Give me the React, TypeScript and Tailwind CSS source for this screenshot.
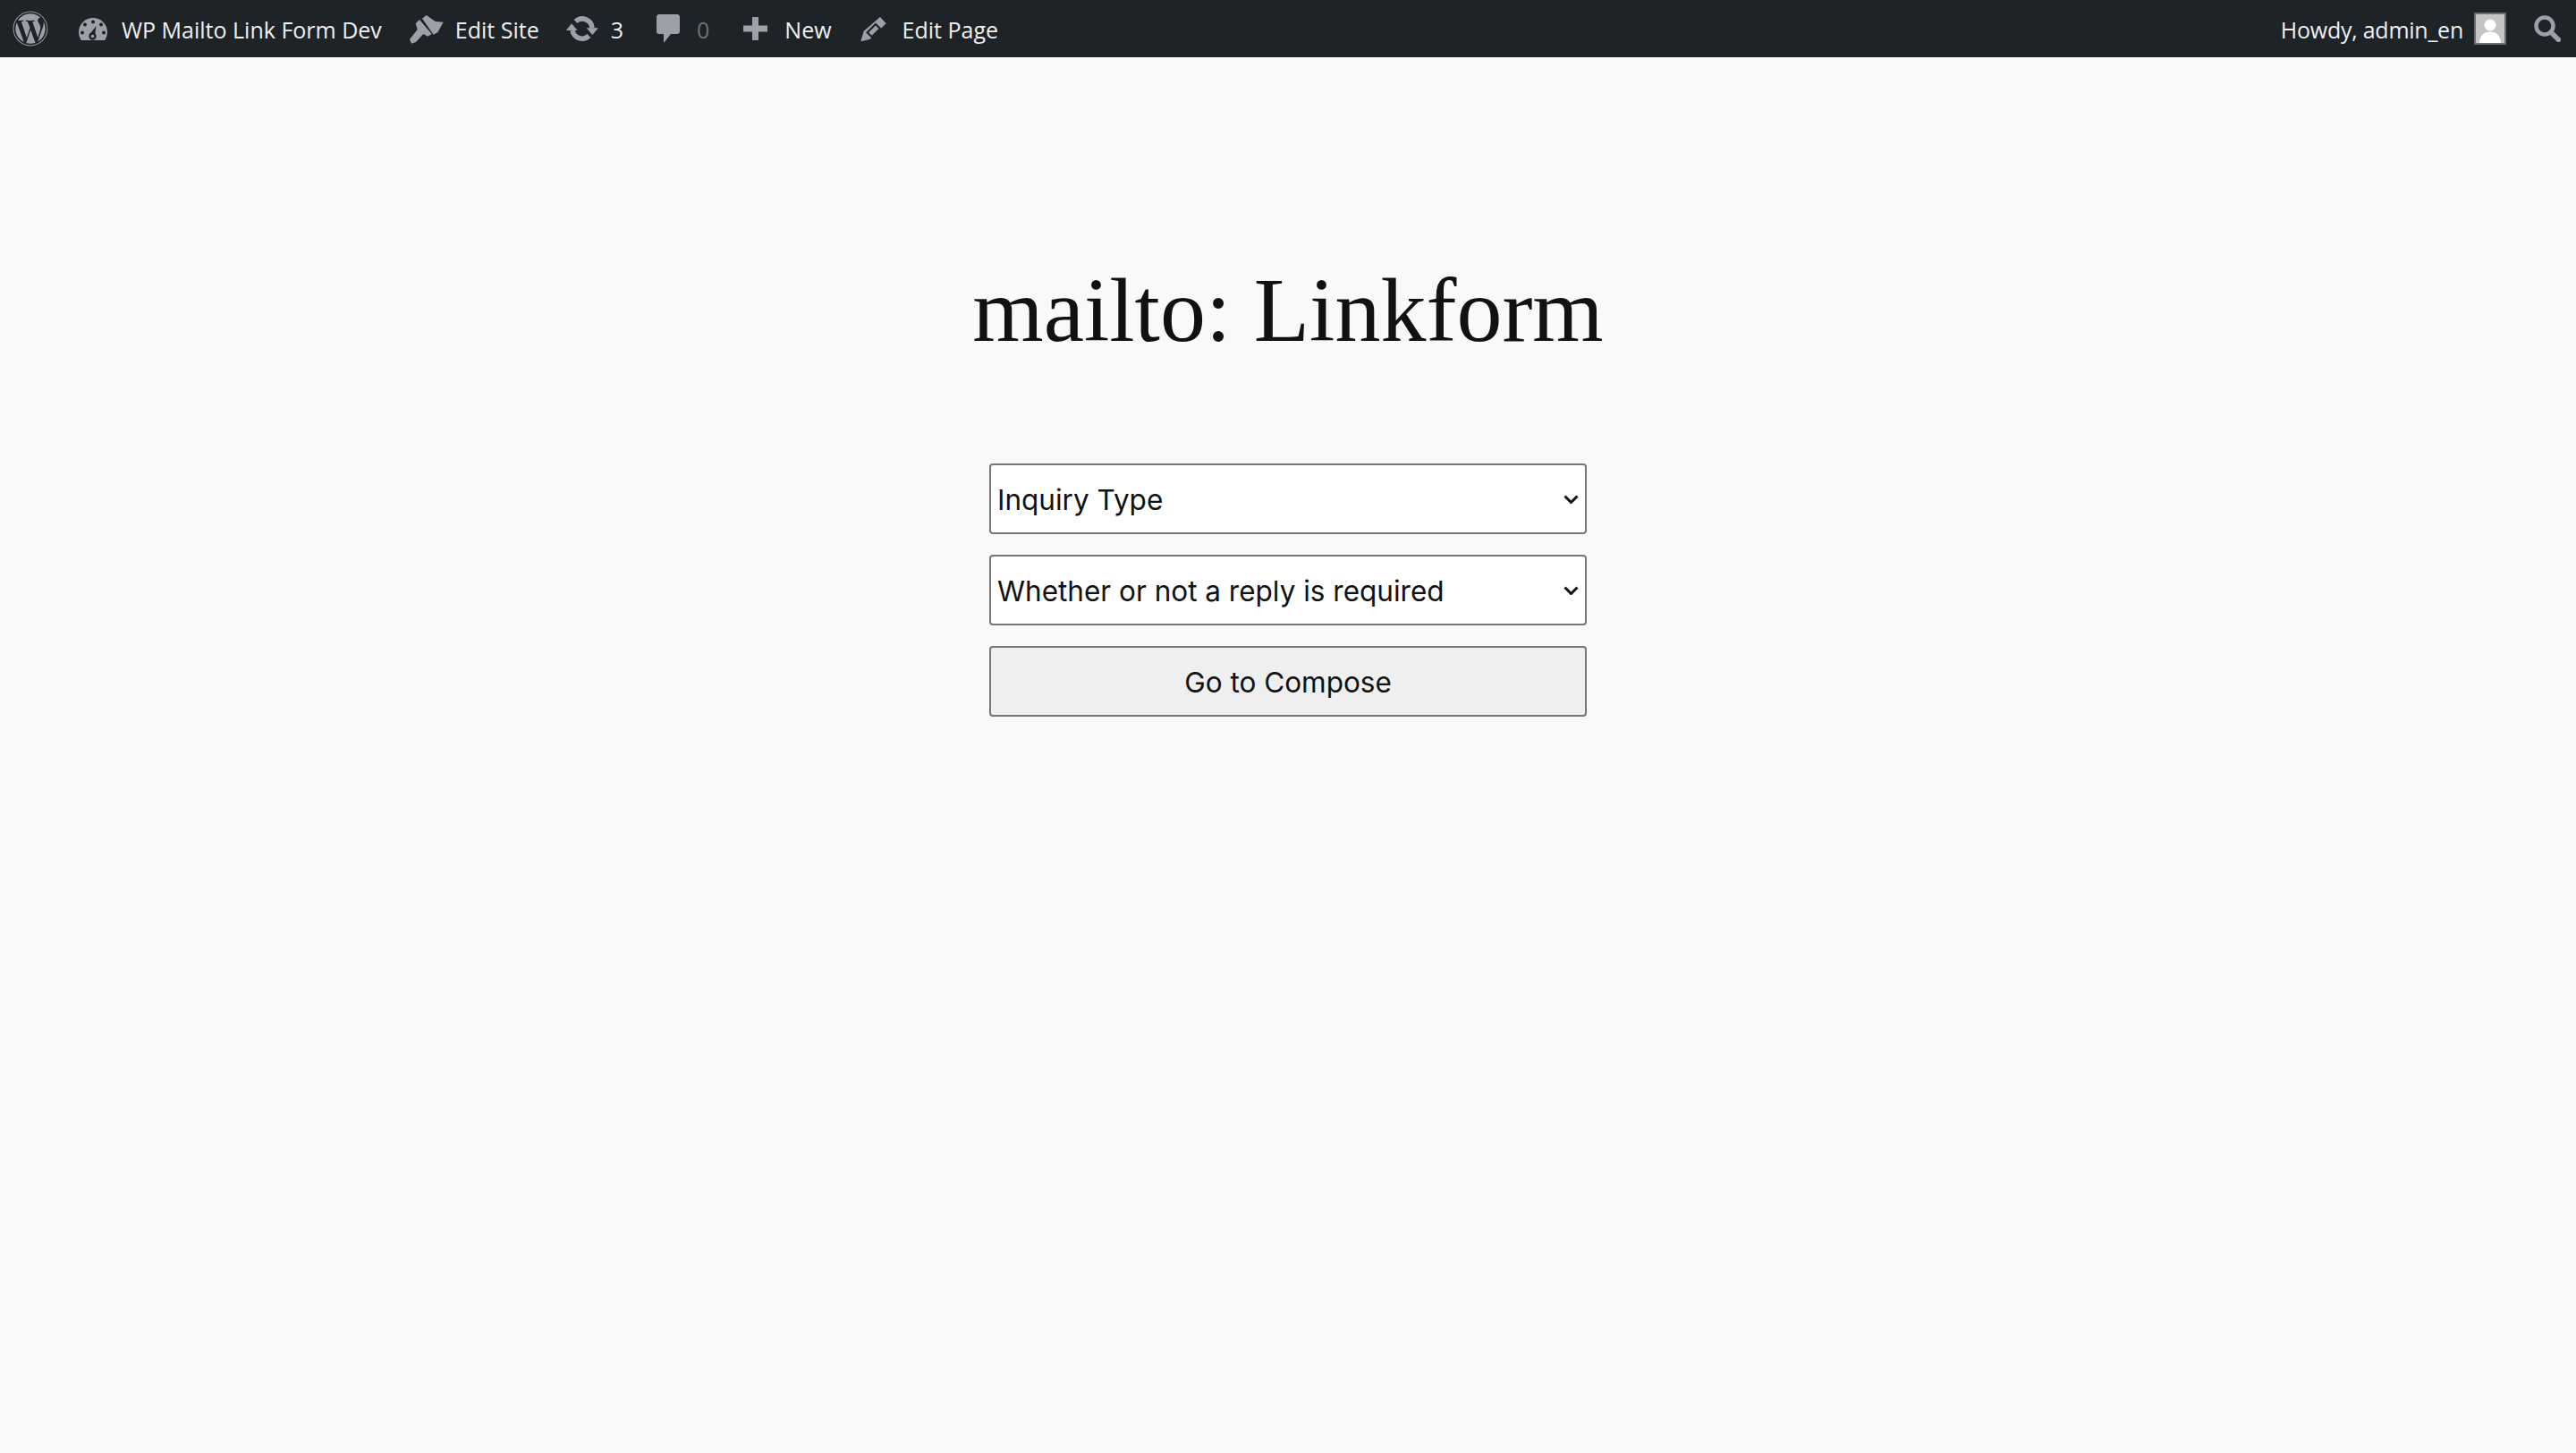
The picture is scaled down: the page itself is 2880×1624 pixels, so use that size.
import { FaWordpress } from 'react-icons/fa'

const ICON = '#9ca1a7'
const BAR = '#1d2327'

function Gauge() {
  return (
    <svg viewBox="0 0 32 25" className="h-[25px] w-8 shrink-0">
      <path fill={ICON} d="M2.800 25A16 16 0 1 1 29.200 25Z" />
      <circle cx="16" cy="4.500" r="2" fill={BAR} />
      <circle cx="7" cy="7.500" r="2" fill={BAR} />
      <circle cx="25" cy="7.500" r="2" fill={BAR} />
      <circle cx="4" cy="16.500" r="2" fill={BAR} />
      <circle cx="28" cy="16.500" r="2" fill={BAR} />
      <path fill={BAR} d="M19.500 9 18.300 18 13 17.500Z" />
      <circle cx="15.500" cy="20.500" r="4.200" fill={BAR} />
      <circle cx="15.500" cy="20.500" r="1.800" fill={ICON} />
    </svg>
  )
}

function Brush() {
  return (
    <svg viewBox="0 0 38 33" className="h-[33px] w-[38px] shrink-0">
      <path fill={ICON} d="M14 4.700 18.700 1 28.700 8l9 .7-6.400 11.600-4.600 2.400Z" />
      <path
        fill={ICON}
        d="M11 6 24.700 22l-4.400 2.700-5-2.700L7 31l-5 1.700L0 28l8.700-11-2-6.700Z"
      />
    </svg>
  )
}

function Update() {
  return (
    <svg viewBox="0 0 36 28" className="h-7 w-9 shrink-0">
      <g fill="none" stroke={ICON} strokeWidth="5.500">
        <path d="M10.500 6A11 11 0 0 1 29 13.500" />
        <path d="M7 16A11 11 0 0 0 25.500 22" />
      </g>
      <path fill={ICON} d="M22.700 13.300H36L29.300 21ZM0 16H12.700L6 8.300Z" />
    </svg>
  )
}

function Comment() {
  return (
    <svg viewBox="0 0 26 32" className="h-8 w-[26px] shrink-0">
      <path
        fill={ICON}
        d="M3 0h20c1.700 0 3 1.300 3 3v16c0 1.700-1.300 3-3 3h-7l-8 10v-10H3c-1.700 0-3-1.300-3-3V3C0 1.300 1.300 0 3 0Z"
      />
    </svg>
  )
}

function Plus() {
  return (
    <svg viewBox="0 0 27 26" className="h-[26px] w-[27px] shrink-0">
      <path fill={ICON} d="M10 0h7v9.500h10v7H17V26h-7v-9.500H0v-7h10Z" />
    </svg>
  )
}

function Pencil() {
  return (
    <svg viewBox="0 0 29 29" className="h-[29px] w-[29px] shrink-0">
      <path fill={ICON} d="M22 1 28.700 8.300 10.300 26 0.300 28.300 3.700 16.700Z" />
      <path
        fill={ICON}
        stroke={BAR}
        strokeWidth="2.200"
        d="M7.700 18.300 17 9l5 5-9.300 9.300Z"
      />
    </svg>
  )
}

function Search() {
  return (
    <svg viewBox="0 0 30 30" className="h-[30px] w-[30px] shrink-0">
      <circle cx="12" cy="12" r="9.500" fill="none" stroke={ICON} strokeWidth="4.500" />
      <path d="M19 19l8.500 8.500" stroke={ICON} strokeWidth="5.500" strokeLinecap="round" />
    </svg>
  )
}

function Avatar() {
  return (
    <div className="h-9 w-9 shrink-0 overflow-hidden border-2 border-[#6a6e72] bg-[#c4c4c4]">
      <svg viewBox="0 0 32 32" className="h-full w-full">
        <circle cx="16" cy="12" r="6.500" fill="#fff" />
        <path fill="#fff" d="M4 32c0-8 5-12.500 12-12.500S28 24 28 32Z" />
      </svg>
    </div>
  )
}

function Chevron() {
  return (
    <svg
      viewBox="0 0 17 10"
      className="pointer-events-none absolute top-[35px] right-[9px] h-2.5 w-[17px]"
    >
      <path d="M1.500 1.500 8.500 8.500 15.500 1.500" fill="none" stroke="#111" strokeWidth="3" />
    </svg>
  )
}

function Select({ label }: { label: string }) {
  return (
    <div className="relative w-full">
      <select className="block h-[79px] w-full appearance-none rounded border-2 border-[#767676] bg-white pt-0.5 pl-[7px] text-[31.5px] text-[#111] [font-family:Inter,sans-serif]">
        <option>{label}</option>
      </select>
      <Chevron />
    </div>
  )
}

export default function App() {
  return (
    <div className="min-h-[1624px] bg-[#f9f9f9]">
      <div className="flex h-16 items-center bg-[#1d2327] text-[25px] text-[#f0f0f1] [font-family:'Open_Sans',sans-serif]">
        <FaWordpress className="ml-3.5 h-10 w-10 shrink-0" color={ICON} />
        <div className="ml-[34px]"><Gauge /></div>
        <span className="ml-4 pt-1">WP Mailto Link Form Dev</span>
        <div className="ml-[31px]"><Brush /></div>
        <span className="ml-[13px] pt-1">Edit Site</span>
        <div className="ml-[30px]"><Update /></div>
        <span className="ml-3.5 pt-1">3</span>
        <div className="ml-[37px]"><Comment /></div>
        <span className="ml-[19px] pt-1 text-[#6f7479]">0</span>
        <div className="ml-[38px]"><Plus /></div>
        <span className="ml-[19px] pt-1">New</span>
        <div className="ml-8"><Pencil /></div>
        <span className="ml-[18px] pt-1">Edit Page</span>
        <div className="ml-auto flex items-center">
          <span className="pt-1 tracking-[-0.25px]">Howdy, admin_en</span>
          <div className="ml-3"><Avatar /></div>
          <div className="mr-[17px] ml-[31px]"><Search /></div>
        </div>
      </div>
      <h1 className="mt-[223px] text-center text-[102px] leading-[120px] font-normal text-[#111] [font-family:'Liberation_Serif',serif]">
        mailto: Linkform
      </h1>
      <form className="mx-auto mt-[111px] flex w-[668px] flex-col gap-[23px]">
        <Select label="Inquiry Type" />
        <Select label="Whether or not a reply is required" />
        <button
          type="button"
          className="h-[79px] w-full rounded border-2 border-[#767676] bg-[#efefef] pt-0.5 text-[31.5px] text-[#111] [font-family:Inter,sans-serif]"
        >
          Go to Compose
        </button>
      </form>
    </div>
  )
}
